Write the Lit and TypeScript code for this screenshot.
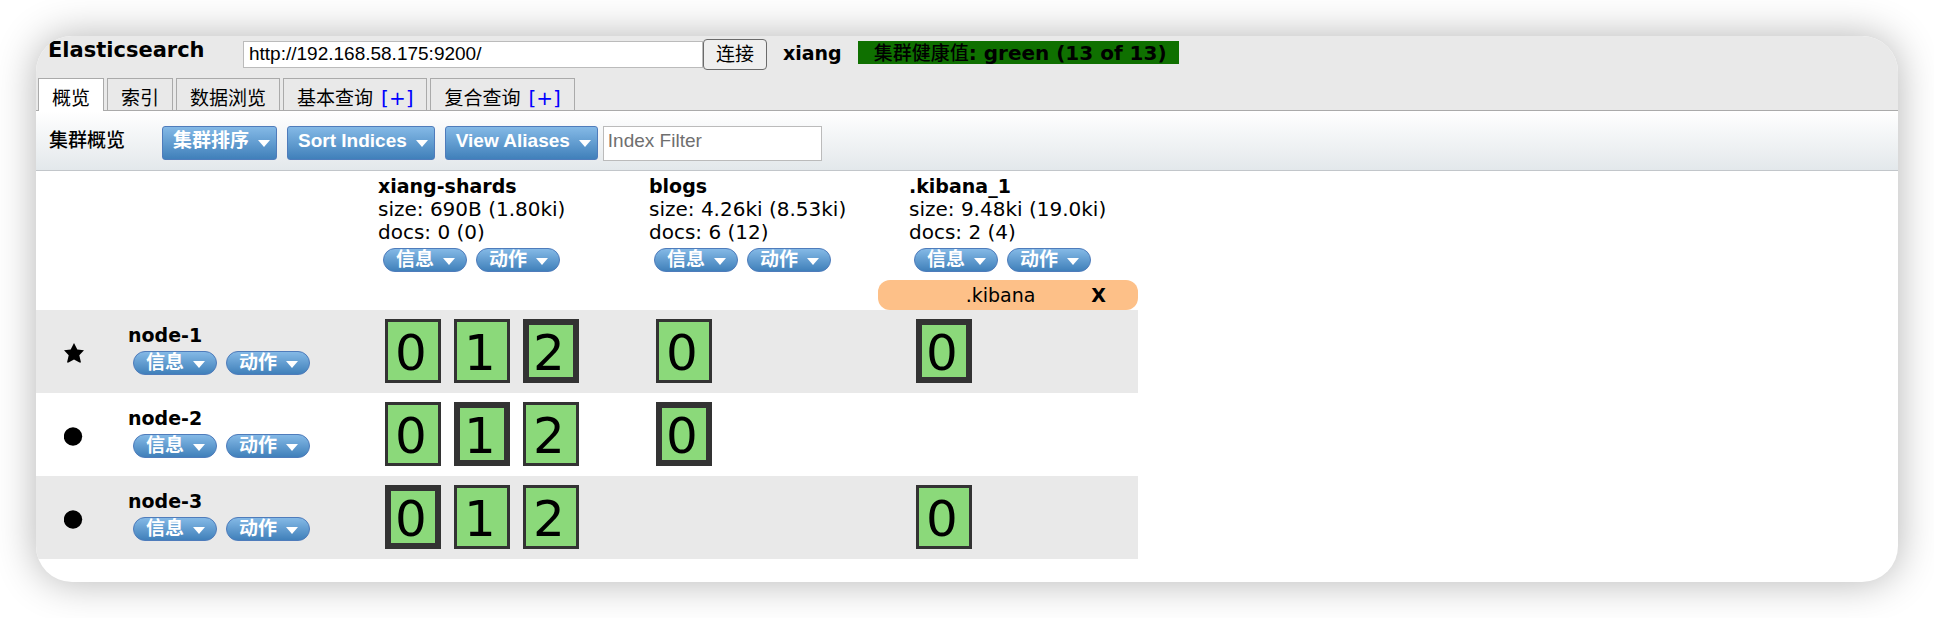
import { LitElement, html, css, svg, nothing } from "lit";
import { customElement, property } from "lit/decorators.js";
import { classMap } from "lit/directives/class-map.js";

interface Shard {
  id: number;
  primary?: boolean;
}

interface IndexInfo {
  name: string;
  size: string;
  docs: string;
  aliases: string[];
}

interface NodeInfo {
  name: string;
  master: boolean;
  shards: Shard[][];
}

const indices: IndexInfo[] = [
  { name: "xiang-shards", size: "690B (1.80ki)", docs: "0 (0)", aliases: [] },
  { name: "blogs", size: "4.26ki (8.53ki)", docs: "6 (12)", aliases: [] },
  { name: ".kibana_1", size: "9.48ki (19.0ki)", docs: "2 (4)", aliases: [".kibana"] },
];

const nodes: NodeInfo[] = [
  {
    name: "node-1",
    master: true,
    shards: [[{ id: 0 }, { id: 1 }, { id: 2, primary: true }], [{ id: 0 }], [{ id: 0, primary: true }]],
  },
  {
    name: "node-2",
    master: false,
    shards: [[{ id: 0 }, { id: 1, primary: true }, { id: 2 }], [{ id: 0, primary: true }], []],
  },
  {
    name: "node-3",
    master: false,
    shards: [[{ id: 0, primary: true }, { id: 1 }, { id: 2 }], [], [{ id: 0 }]],
  },
];

const tabs = [
  { label: "概览", extra: false },
  { label: "索引", extra: false },
  { label: "数据浏览", extra: false },
  { label: "基本查询", extra: true },
  { label: "复合查询", extra: true },
];

@customElement("menu-button")
export class MenuButton extends LitElement {
  @property() label = "";
  @property({ type: Boolean }) pill = false;

  static styles = css`
    :host {
      display: block;
    }
    .button {
      display: flex;
      align-items: center;
      gap: 9px;
      height: 34px;
      box-sizing: border-box;
      margin: 0;
      padding: 0 6px 4px 10px;
      border: 1px solid #4f7cbb;
      border-radius: 3px;
      background: linear-gradient(#84b9e6, #4080ba);
      color: #fff;
      font: bold 19px/24px "Liberation Sans", Arial, "Noto Sans CJK SC", sans-serif;
      white-space: nowrap;
      cursor: pointer;
    }
    .pill {
      height: 24px;
      padding: 0 11px 0 12px;
      border-radius: 12px;
      line-height: 22px;
    }
    .arrow {
      display: block;
      width: 12px;
      height: 7px;
      margin-top: 5px;
      fill: #fff;
    }
    .pill .arrow {
      margin-top: 3px;
    }
  `;

  render() {
    return html`<button class=${classMap({ button: true, pill: this.pill })} type="button">
      <span>${this.label}</span>
      <svg class="arrow" viewBox="0 0 12 7" aria-hidden="true"><path d="M0 0h12L6 7z" /></svg>
    </button>`;
  }
}

@customElement("app-root")
export class AppRoot extends LitElement {
  static styles = css`
    :host {
      display: block;
      padding: 36px;
      background: #fff;
      color: #000;
      font: 19px/23px "DejaVu Sans", Verdana, "Noto Sans CJK SC", sans-serif;
    }
    .window {
      overflow: hidden;
      padding-bottom: 23px;
      border-radius: 36px;
      background: #fff;
      box-shadow: 0 0 40px rgba(0, 0, 0, 0.3);
    }
    .top {
      background: #e9e9e9;
      border-bottom: 1px solid #aaa;
    }
    .connect {
      display: flex;
      align-items: flex-start;
      height: 42px;
      padding-left: 12px;
    }
    .title {
      width: 195px;
      margin: 0;
      padding-top: 3px;
      font-size: 21px;
      font-weight: bold;
      line-height: 23px;
    }
    .input {
      box-sizing: border-box;
      margin: 0;
      padding: 0 5px;
      border: 1px solid #bbb;
      border-radius: 0;
      background: #fff;
      color: #000;
      font: 19px/23px "Liberation Sans", Arial, sans-serif;
      outline: none;
    }
    .input::placeholder {
      color: #6f6f6f;
      opacity: 1;
    }
    .url {
      width: 460px;
      height: 27px;
      margin-top: 5px;
      padding-bottom: 2px;
    }
    .go {
      box-sizing: border-box;
      width: 64px;
      height: 31px;
      margin: 3px 16px 0 0;
      padding: 0 0 3px;
      border: 1px solid #6b6b6b;
      border-radius: 4px;
      background: #efefef;
      color: #000;
      font: 19px/24px "Noto Sans CJK SC", sans-serif;
    }
    .cluster {
      padding-top: 6px;
      font-weight: bold;
    }
    .health {
      display: flex;
      margin: 5px 0 0 16px;
      padding: 1px 12px 0 16px;
      background: #0f7000;
      font-size: 20px;
      font-weight: bold;
      line-height: 22px;
      white-space: nowrap;
    }
    .health-label {
      font-size: 19px;
      font-weight: 500;
    }
    .tabs {
      display: flex;
      gap: 3px;
      padding-left: 2px;
    }
    .tab {
      box-sizing: border-box;
      height: 32px;
      padding: 8px 13px 0;
      border: 1px solid #aaa;
      border-bottom: 0;
      color: #000;
      line-height: 23px;
      white-space: nowrap;
    }
    .tab a {
      color: inherit;
      text-decoration: none;
    }
    .tab .more {
      margin-left: 2px;
      color: #00f;
      font-size: 20px;
    }
    .active {
      margin-bottom: -1px;
      height: 33px;
      background: #fff;
    }
    .toolbar {
      display: flex;
      align-items: flex-start;
      height: 59px;
      box-sizing: content-box;
      border-bottom: 1px solid #c2c6ca;
      padding-left: 13px;
      background: linear-gradient(#fff, #e3e8eb);
    }
    .heading {
      width: 113px;
      margin: 0;
      padding-top: 18px;
      font-size: 19px;
      font-weight: 500;
      line-height: 23px;
    }
    .menus {
      display: flex;
      gap: 10px;
      padding-top: 15px;
    }
    .filter {
      width: 219px;
      height: 35px;
      margin: 15px 0 0 5px;
      padding-bottom: 6px;
      padding-left: 4px;
    }
    .grid {
      border-collapse: collapse;
      table-layout: fixed;
    }
    .col-icon {
      width: 61px;
    }
    .col-node {
      width: 250px;
    }
    .col-wide {
      width: 271px;
    }
    .col-index {
      width: 260px;
    }
    th,
    td {
      padding: 0;
      text-align: left;
      vertical-align: top;
      font-weight: normal;
    }
    .head {
      height: 139px;
    }
    .info {
      padding: 4px 0 0 31px;
      white-space: nowrap;
    }
    .name {
      font-weight: bold;
    }
    .stat {
      font-size: 20px;
    }
    .pills {
      display: flex;
      gap: 9px;
      padding: 4px 0 0 5px;
    }
    .alias {
      display: grid;
      grid-template-columns: 1fr auto 1fr;
      align-items: center;
      height: 30px;
      margin-top: 8px;
      padding: 0 32px 0 17px;
      border-radius: 12px;
      background: #fdc088;
    }
    .alias-name {
      grid-column: 2;
    }
    .remove {
      justify-self: end;
      margin: 0;
      padding: 0;
      border: 0;
      background: none;
      color: #000;
      font: bold 19px/23px "DejaVu Sans", Verdana, sans-serif;
    }
    .node:nth-child(odd) {
      background: #e9e9e9;
    }
    .node > td,
    .node > th {
      height: 83px;
    }
    .node .info {
      padding-top: 14px;
    }
    .mark {
      display: block;
      width: 20px;
      height: 20px;
      margin: 33px 0 0 28px;
    }
    .shards {
      display: flex;
      gap: 13px;
      padding: 9px 0 0 38px;
    }
    .shard {
      box-sizing: border-box;
      width: 56px;
      height: 64px;
      border: 3px solid #333;
      background: #8bd97a;
      padding-right: 4px;
      font-size: 50px;
      line-height: 62px;
      text-align: center;
    }
    .primary {
      border-width: 6px;
      line-height: 57px;
    }
  `;

  private renderHead(index: IndexInfo) {
    return html`<th scope="col">
      <div class="info">
        <div class="name">${index.name}</div>
        <div class="stat">size: ${index.size}</div>
        <div class="stat">docs: ${index.docs}</div>
        ${this.renderPills()}
      </div>
      ${index.aliases.length
        ? index.aliases.map(
            (alias) => html`<div class="alias">
              <span class="alias-name">${alias}</span>
              <button class="remove" type="button">X</button>
            </div>`
          )
        : nothing}
    </th>`;
  }

  private renderPills() {
    return html`<div class="pills">
      <menu-button pill label="信息"></menu-button>
      <menu-button pill label="动作"></menu-button>
    </div>`;
  }

  private renderNode(node: NodeInfo) {
    return html`<tr class="node">
      <td>
        <svg class="mark" viewBox="0 0 20 20" aria-hidden="true">
          ${node.master
            ? svg`<path d="M10 0l3.300 6.500 6.700 .8-4.700 5 1.700 7.200h-1.500L10 16.500l-5.500 3H3l1.700-7.200L0 7.300l6.700-.8z" />`
            : svg`<circle cx="9" cy="10.500" r="9.200" />`}
        </svg>
      </td>
      <th scope="row">
        <div class="info">
          <div class="name">${node.name}</div>
          ${this.renderPills()}
        </div>
      </th>
      ${node.shards.map(
        (group) => html`<td>
          <div class="shards">
            ${group.map(
              (shard) =>
                html`<div class=${classMap({ shard: true, primary: !!shard.primary })}>${shard.id}</div>`
            )}
          </div>
        </td>`
      )}
    </tr>`;
  }

  render() {
    return html`<main class="window">
      <header class="top">
        <div class="connect">
          <h1 class="title">Elasticsearch</h1>
          <input class="input url" type="text" aria-label="URL" value="http://192.168.58.175:9200/" />
          <button class="go" type="button">连接</button>
          <span class="cluster">xiang</span>
          <span class="health"><span class="health-label">集群健康值</span>: green (13 of 13)</span>
        </div>
        <nav class="tabs">
          ${tabs.map(
            (tab, i) => html`<div class=${classMap({ tab: true, active: i === 0 })}>
              <a href="#">${tab.label}</a>${tab.extra ? html` <a class="more" href="#">[+]</a>` : nothing}
            </div>`
          )}
        </nav>
      </header>
      <section class="toolbar">
        <h2 class="heading">集群概览</h2>
        <div class="menus">
          <menu-button label="集群排序"></menu-button>
          <menu-button label="Sort Indices"></menu-button>
          <menu-button label="View Aliases"></menu-button>
        </div>
        <input class="input filter" type="text" aria-label="Index Filter" placeholder="Index Filter" />
      </section>
      <table class="grid">
        <colgroup>
          <col class="col-icon" />
          <col class="col-node" />
          <col class="col-wide" />
          <col class="col-index" />
          <col class="col-index" />
        </colgroup>
        <thead>
          <tr class="head">
            <td></td>
            <td></td>
            ${indices.map((index) => this.renderHead(index))}
          </tr>
        </thead>
        <tbody>
          ${nodes.map((node) => this.renderNode(node))}
        </tbody>
      </table>
    </main>`;
  }
}
